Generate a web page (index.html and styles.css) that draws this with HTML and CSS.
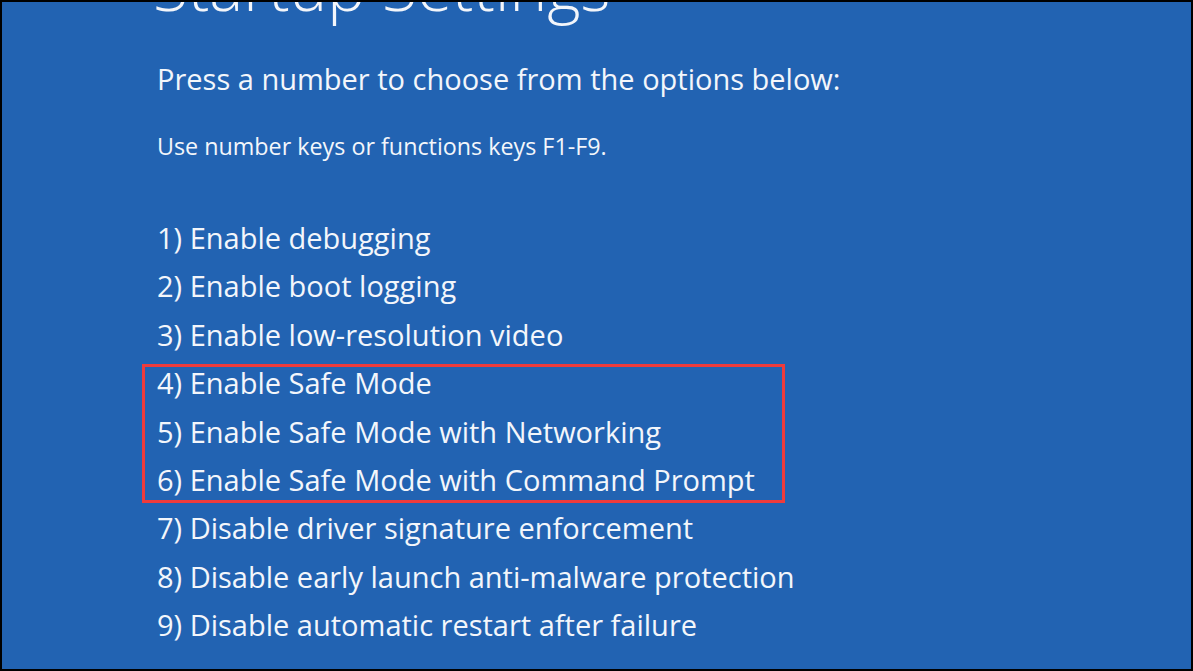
FILE: index.html
```html
<!DOCTYPE html>
<html lang="en">
<head>
    <meta charset="UTF-8">
    <title>Startup Settings</title>
    <link rel="stylesheet" href="styles.css">
</head>
<body>
    <div class="screen">
        <h1 class="title">Startup Settings</h1>
        <p class="prompt">Press a number to choose from the options below:</p>
        <p class="hint">Use number keys or functions keys F1-F9.</p>
        <ul class="options">
            <li>1) Enable debugging</li>
            <li>2) Enable boot logging</li>
            <li>3) Enable low-resolution video</li>
            <li class="highlight">
                <ul class="options">
                    <li>4) Enable Safe Mode</li>
                    <li>5) Enable Safe Mode with Networking</li>
                    <li>6) Enable Safe Mode with Command Prompt</li>
                </ul>
            </li>
            <li>7) Disable driver signature enforcement</li>
            <li>8) Disable early launch anti-malware protection</li>
            <li>9) Disable automatic restart after failure</li>
        </ul>
    </div>
</body>
</html>
```

FILE: styles.css
```css
html, body {
    margin: 0;
    background-color: #000;
}
body {
    padding: 2px;
    font-family: 'Open Sans', 'Noto Sans', sans-serif;
}
.screen {
    height: 667px;
    background-color: #2263b2;
    color: #f3f6fb;
    padding-left: 155px;
    overflow: hidden;
    box-sizing: border-box;
}
.title {
    margin: -55px 0 0 -4px;
    font-size: 64px;
    font-weight: 300;
    line-height: 80px;
}
.prompt {
    margin: 32px 0 0;
    font-size: 29px;
    line-height: 40px;
}
.hint {
    margin: 32px 0 0;
    font-size: 23.3px;
    line-height: 30px;
}
.options {
    list-style: none;
    margin: 0;
    padding: 0;
    font-size: 29px;
    line-height: 48.4px;
}
.screen > .options {
    margin-top: 53px;
}
.highlight {
    position: relative;
}
.highlight::before {
    content: "";
    position: absolute;
    top: 5px;
    bottom: 1px;
    left: -15px;
    width: 643px;
    border: 3px solid #ef3b3b;
    box-sizing: border-box;
}
```
